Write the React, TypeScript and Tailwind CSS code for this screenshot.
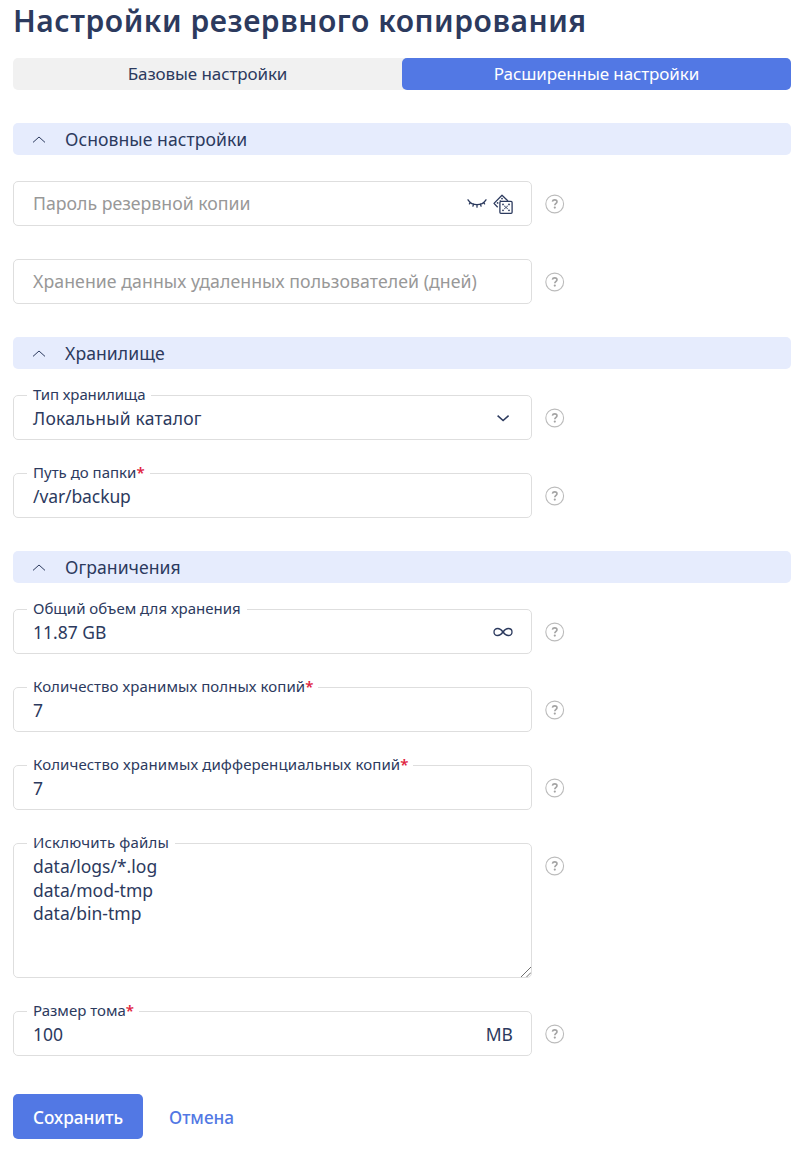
import React, { ReactNode } from 'react';
import clsx from 'clsx';

function HelpIcon({ className }: { className?: string }) {
  return (
    <svg className={clsx('shrink-0 w-5 h-5', className)} viewBox="0 0 20 20" fill="none">
      <circle cx="9.7" cy="10" r="8.9" stroke="#bcbcbc" strokeWidth="1.1" />
      <path d="M7.4 7.6C7.6 6.4 8.5 5.9 9.7 5.9C11.1 5.9 12 6.6 12 7.7C12 9.3 9.8 9.4 9.8 11.3" stroke="#a3a3a3" strokeWidth="1.6" />
      <circle cx="9.8" cy="13.6" r="1.1" fill="#a3a3a3" />
    </svg>
  );
}

function ClosedEyeIcon() {
  return (
    <svg className="w-5 h-5" viewBox="0 0 20 20" fill="none" stroke="#2c3a5e" strokeWidth="1.3" strokeLinecap="round">
      <path d="M1 5.8C3 8.9 6.2 10.7 10 10.7C13.8 10.7 17 8.9 19 5.8" />
      <path d="M3.6 8.4L2.4 9.9M6.6 10.1L5.9 12.2M10 10.7V13.2M13.4 10.1L14.1 12.2M16.4 8.4L17.6 9.9" />
    </svg>
  );
}

function DiceIcon() {
  return (
    <svg className="w-5 h-5" viewBox="0 0 20 20" fill="none" stroke="#2c3a5e" strokeWidth="1.3">
      <path d="M4.7 13.2L1 9.4L9 1.2L15 7" strokeLinejoin="round" />
      <rect x="6.9" y="7.4" width="12.2" height="11.9" rx="1" />
      <g fill="#2c3a5e" stroke="none">
        <circle cx="10" cy="10.4" r="0.9" />
        <circle cx="16" cy="10.4" r="0.9" />
        <circle cx="11.8" cy="12.2" r="0.6" />
        <circle cx="14.2" cy="12.2" r="0.6" />
        <circle cx="13" cy="13.4" r="0.8" />
        <circle cx="11.8" cy="14.6" r="0.6" />
        <circle cx="14.2" cy="14.6" r="0.6" />
        <circle cx="10" cy="16.3" r="0.9" />
        <circle cx="16" cy="16.3" r="0.9" />
        <circle cx="9" cy="4.6" r="0.9" />
        <circle cx="4.6" cy="8.9" r="0.9" />
        <circle cx="7.2" cy="6.6" r="0.6" />
      </g>
    </svg>
  );
}

function ChevronDownIcon() {
  return (
    <svg className="w-5 h-5" viewBox="0 0 20 20" fill="none" stroke="#2c3a5e" strokeWidth="1.5">
      <path d="M4.6 7.6L10.1 12.6L15.6 7.6" />
    </svg>
  );
}

function InfinityIcon() {
  return (
    <svg className="w-5 h-5" viewBox="0 0 20 20" fill="none" stroke="#2c3a5e" strokeWidth="1.3">
      <path d="M10 10C8.4 7.8 7 6.5 4.8 6.5C2.4 6.5 1 8 1 10C1 12 2.4 13.5 4.8 13.5C7 13.5 8.4 12.2 10 10C11.6 7.8 13 6.5 15.2 6.5C17.6 6.5 19 8 19 10C19 12 17.6 13.5 15.2 13.5C13 13.5 11.6 12.2 10 10Z" />
    </svg>
  );
}

function SectionHeader({ title }: { title: string }) {
  return (
    <div className="flex items-center h-8 rounded-[5px] bg-[#e6ecfd] pl-[19px]">
      <svg className="w-[14px] h-[14px]" viewBox="0 0 14 14" fill="none" stroke="#2c3a5e">
        <path d="M1 10.4L7 5L13 10.4" />
      </svg>
      <h2 className="ml-[19px] text-[17.6px] leading-8 tracking-[0.05px]">{title}</h2>
    </div>
  );
}

// Empty input, the placeholder is inside the frame
function EmptyField({ placeholder, className, children }: { placeholder: string; className?: string; children?: ReactNode }) {
  return (
    <div className="flex items-center gap-[13px]">
      <div className="flex items-center w-[519px] h-[45px] border border-[#dedede] rounded-[5px] pl-[19px] pr-[18px]">
        <span className={clsx('grow pb-[2px] text-[17.7px] leading-6 text-[#989898] whitespace-nowrap', className)}>{placeholder}</span>
        {children}
      </div>
      <HelpIcon />
    </div>
  );
}

interface FieldProps {
  label: string;
  required?: boolean;
  labelClass?: string;
  heightClass?: string;
  children: ReactNode;
}

// Filled input, the label cuts the top border
function Field({ label, required, labelClass, heightClass = 'h-[53px]', children }: FieldProps) {
  return (
    <div className="flex items-start gap-[13px]">
      <fieldset className={clsx('relative w-[519px] border border-[#dedede] rounded-[5px] pl-[13px] pr-[18px]', heightClass)}>
        <legend className={clsx('px-[6px] h-4 leading-[14px] text-[15px] whitespace-nowrap', labelClass)}>
          {label}
          {required && <span className="text-[#e0243f] font-semibold tracking-[-1px]">*</span>}
        </legend>
        {children}
      </fieldset>
      <HelpIcon className="mt-[21px]" />
    </div>
  );
}

function Value({ text, className, children }: { text: string; className?: string; children?: ReactNode }) {
  return (
    <div className="flex items-center justify-between h-6 mt-[3px] pl-[6px] text-[17.5px]">
      <span className={className}>{text}</span>
      {children}
    </div>
  );
}

export default function App() {
  return (
    <main className="w-[800px] h-[1158px] bg-white pl-[13px] pr-[9px] font-['Noto_Sans','Open_Sans',sans-serif] text-[#2c3a5e]">
      <h1 className="h-[41px] leading-[41px] text-[30px] font-semibold tracking-[0.55px] whitespace-nowrap">Настройки резервного копирования</h1>

      <div className="grid grid-cols-2 h-8 mt-[17px] rounded-[5px] bg-[#f1f1f1] text-center text-[17px] leading-8 tracking-[-0.1px]">
        <div>Базовые настройки</div>
        <div className="rounded-[5px] bg-[#5278e4] text-white">Расширенные настройки</div>
      </div>

      <section className="mt-[33px]">
        <SectionHeader title="Основные настройки" />
        <div className="flex flex-col gap-[33px] mt-[26px]">
          <EmptyField placeholder="Пароль резервной копии">
            <div className="flex gap-[6px]">
              <ClosedEyeIcon />
              <DiceIcon />
            </div>
          </EmptyField>
          <EmptyField placeholder="Хранение данных удаленных пользователей (дней)" className="tracking-[0.06px]" />
        </div>
      </section>

      <section className="mt-[33px]">
        <SectionHeader title="Хранилище" />
        <div className="flex flex-col gap-[25px] mt-[18px]">
          <Field label="Тип хранилища" labelClass="tracking-[-0.1px]">
            <Value text="Локальный каталог" className="tracking-[0.2px]">
              <ChevronDownIcon />
            </Value>
          </Field>
          <Field label="Путь до папки" required>
            <Value text="/var/backup" className="tracking-[-0.1px]" />
          </Field>
        </div>
      </section>

      <section className="mt-[33px]">
        <SectionHeader title="Ограничения" />
        <div className="flex flex-col gap-[25px] mt-[18px]">
          <Field label="Общий объем для хранения">
            <Value text="11.87 GB">
              <InfinityIcon />
            </Value>
          </Field>
          <Field label="Количество хранимых полных копий" required labelClass="tracking-[0.06px]">
            <Value text="7" />
          </Field>
          <Field label="Количество хранимых дифференциальных копий" required labelClass="tracking-[0.11px]">
            <Value text="7" />
          </Field>
          <Field label="Исключить файлы" heightClass="h-[143px]" labelClass="tracking-[0.18px]">
            <div className="mt-[4px] pl-[6px] text-[17.5px] leading-[23.5px]">
              <div>data/logs/*.log</div>
              <div>data/mod-tmp</div>
              <div>data/bin-tmp</div>
            </div>
            <svg className="absolute right-0 bottom-0 w-[10px] h-[10px]" viewBox="0 0 10 10" stroke="#6f6f6f">
              <path d="M0 10L10 0M5.5 10L10 5.5" />
            </svg>
          </Field>
          <Field label="Размер тома" required>
            <Value text="100">
              <span>MB</span>
            </Value>
          </Field>
        </div>
      </section>

      <div className="flex gap-[26px] mt-[38px] text-[17.2px] leading-[47px]">
        <button className="w-[130px] h-[45px] rounded-[5px] bg-[#5278e4] text-white font-medium">Сохранить</button>
        <button className="h-[45px] text-[#5278e4] font-medium">Отмена</button>
      </div>
    </main>
  );
}
